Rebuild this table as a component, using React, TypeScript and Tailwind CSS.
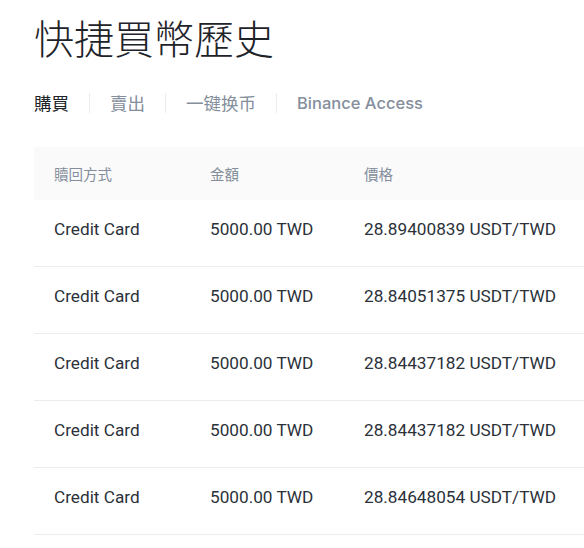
import React from "react";

const rows = [
  "28.89400839",
  "28.84051375",
  "28.84437182",
  "28.84437182",
  "28.84648054",
];

const cjk = '"Noto Sans CJK TC", "Noto Sans", sans-serif';

export default function App() {
  return (
    <div
      className="w-[584px] h-[548px] overflow-hidden bg-white text-[#1e2329]"
      style={{ fontFamily: cjk }}
    >
      <div className="pl-[34px] pt-[9px]">
        <h1 className="text-[40px] leading-[56px] font-light text-[#1e2329]" style={{ fontFamily: cjk }}>
          快捷買幣歷史
        </h1>
        <div className="mt-[26px] flex items-center text-[17.5px] leading-[24px]" style={{ fontFamily: cjk }}>
          <span className="text-[#1e2329]">購買</span>
          <span className="mx-[20px] h-[20px] w-px bg-[#eaecef]" />
          <span className="text-[#848e9c]">賣出</span>
          <span className="mx-[20px] h-[20px] w-px bg-[#eaecef]" />
          <span className="text-[#848e9c]">一键换币</span>
          <span className="mx-[20px] h-[20px] w-px bg-[#eaecef]" />
          <span className="text-[16.5px] text-[#848e9c] font-medium" style={{ fontFamily: 'Inter, "Noto Sans", sans-serif' }}>Binance Access</span>
        </div>
        <div className="mt-[32px]">
          <div className="flex h-[53px] items-center bg-[#fafafa] text-[14.5px] text-[#848e9c]" style={{ fontFamily: cjk }}>
            <div className="w-[176px] pl-[20px]">贖回方式</div>
            <div className="w-[154px]">金額</div>
            <div>價格</div>
          </div>
          {rows.map((p, i) => (
            <div key={i} className="flex h-[67px] items-center pb-[7px] border-b border-[#eaecef] text-[17.2px] text-[#2b3139]" style={{ fontFamily: 'Roboto, sans-serif' }}>
              <div className="w-[176px] pl-[20px]">Credit Card</div>
              <div className="w-[154px]">5000.00 TWD</div>
              <div>{p} USDT/TWD</div>
            </div>
          ))}
        </div>
      </div>
    </div>
  );
}
